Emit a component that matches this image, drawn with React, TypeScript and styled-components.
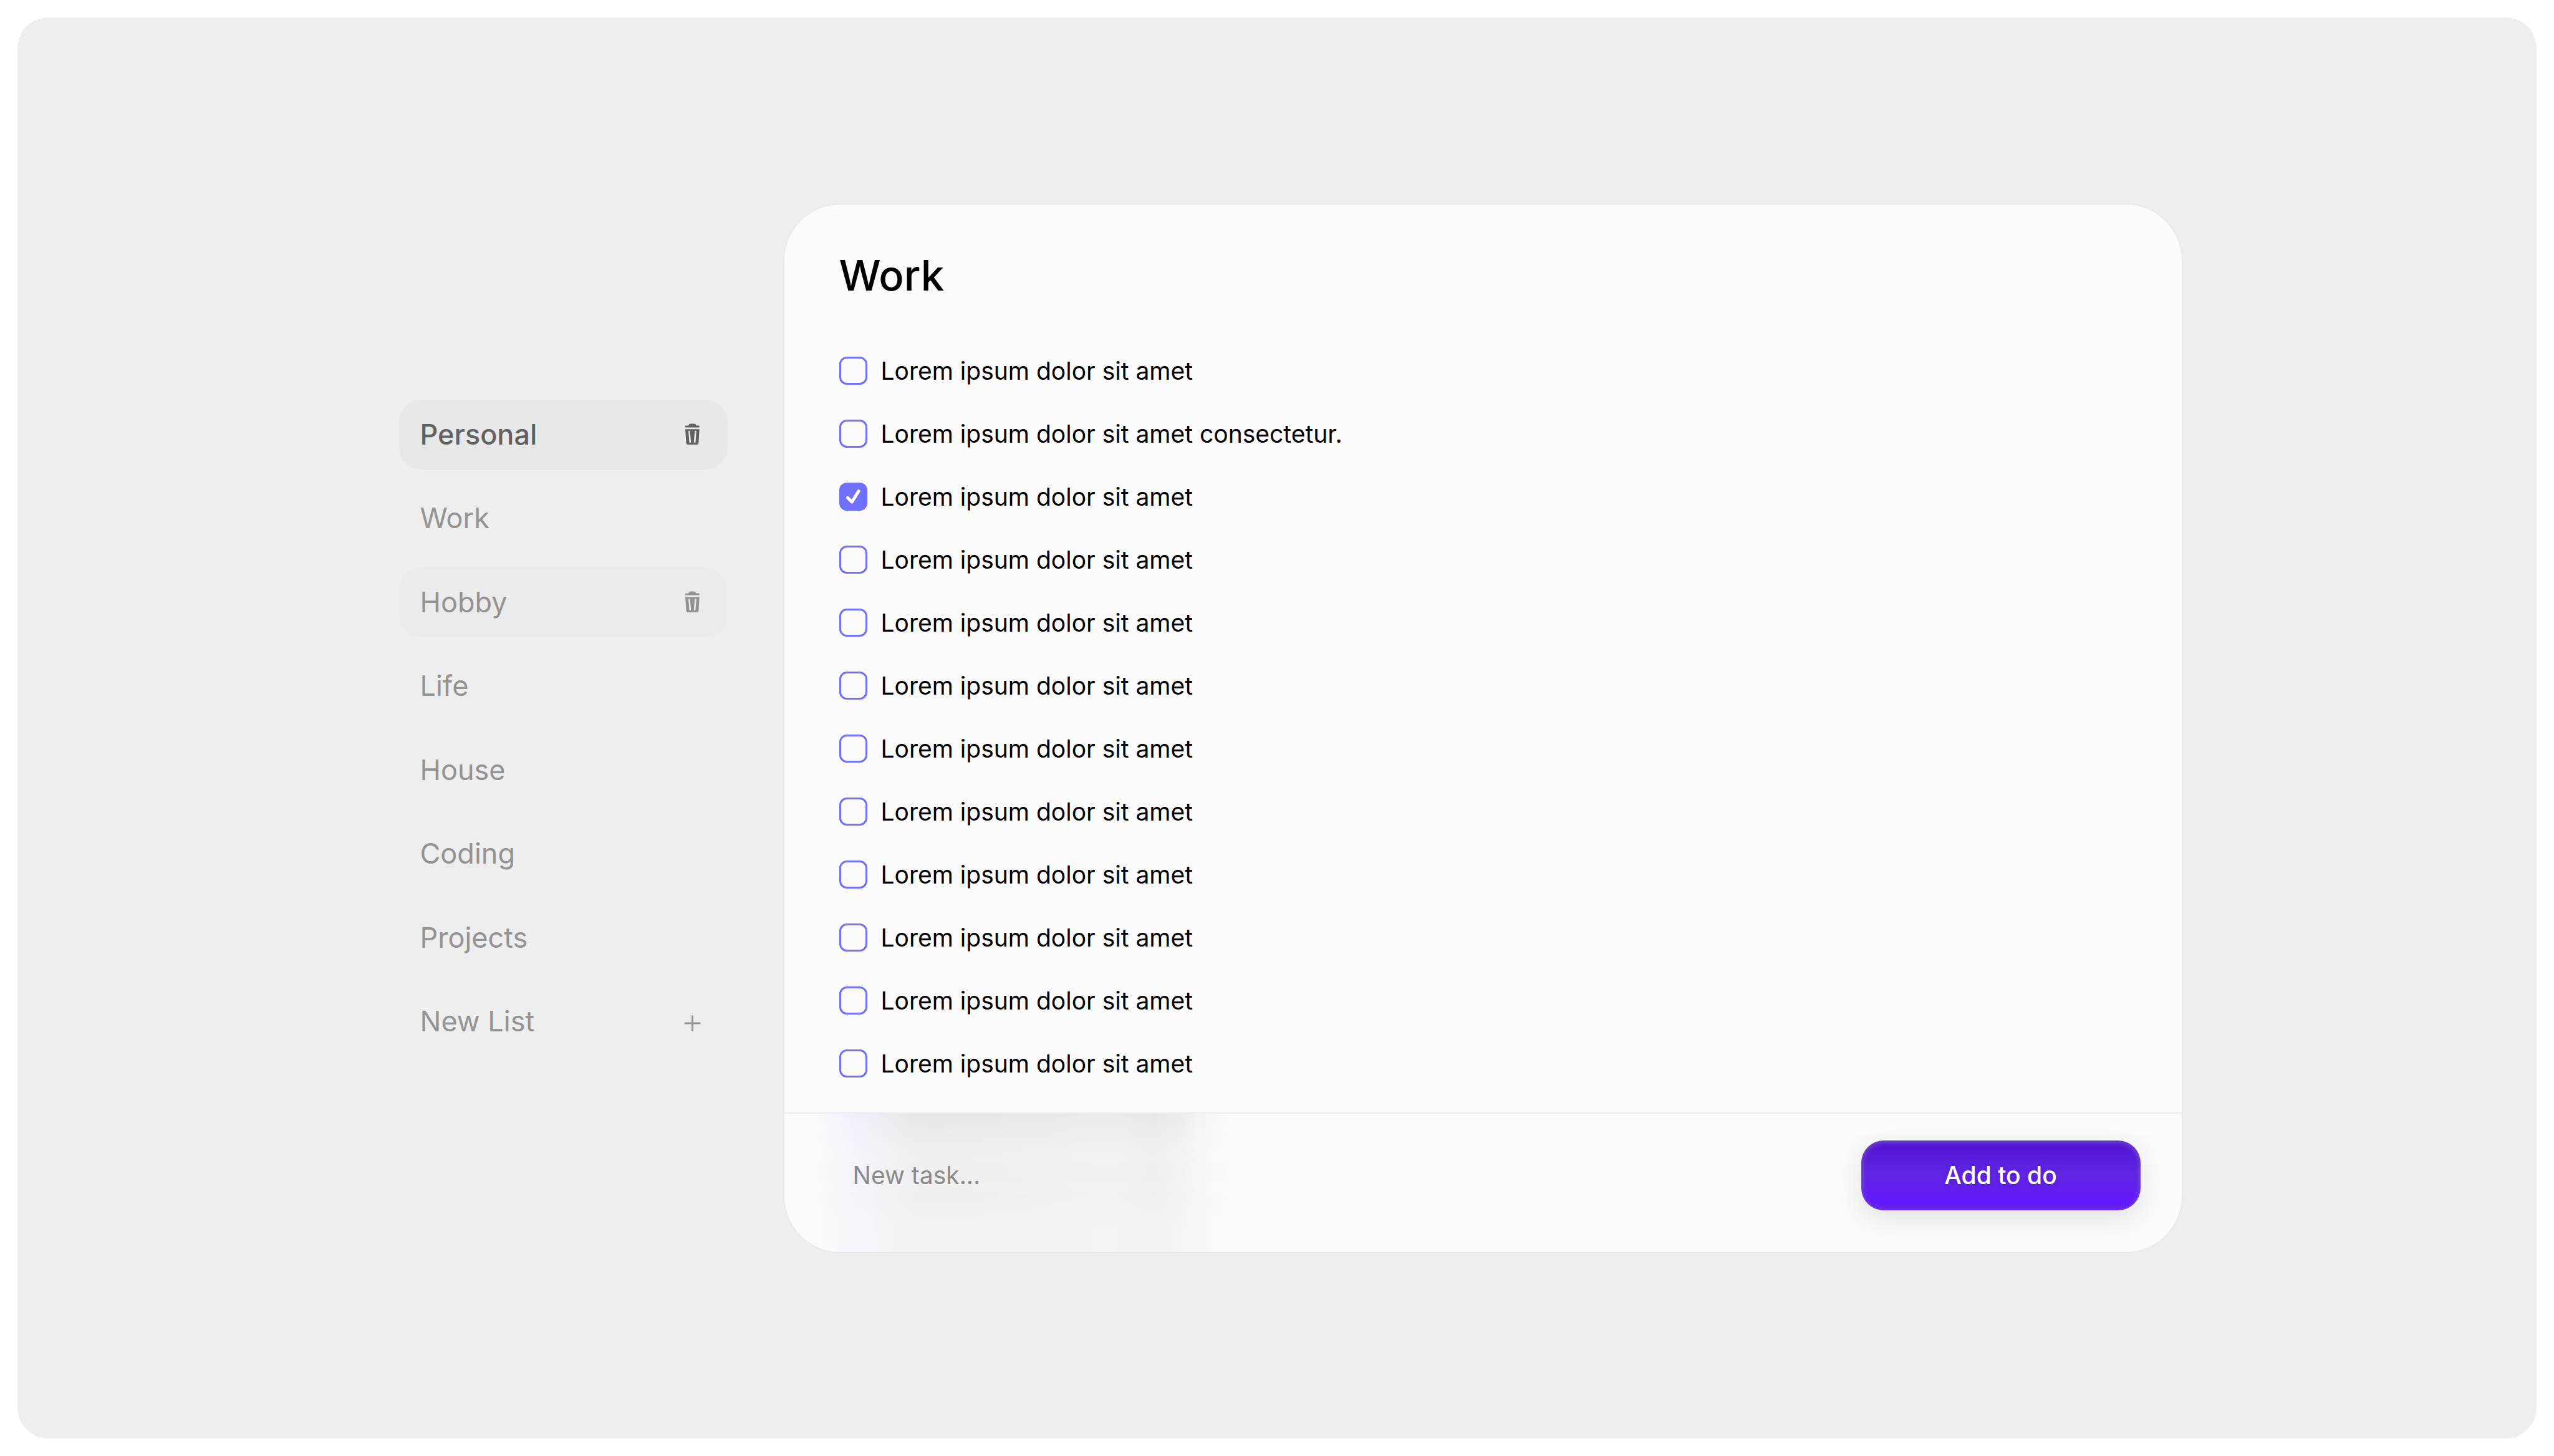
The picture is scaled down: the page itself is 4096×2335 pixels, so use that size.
import React, { FormEvent, useState } from "react";
import styled, { createGlobalStyle } from "styled-components";

const GlobalStyle = createGlobalStyle`
  *, *::before, *::after { box-sizing: border-box; }
  body { margin: 0; background: #ffffff; }
  body, button, input {
    font-family: Inter, "Liberation Sans", sans-serif;
    font-optical-sizing: none;
  }
  button, input { margin: 0; padding: 0; border: 0; background: none; color: inherit; }
  button { cursor: pointer; }
`;

const Page = styled.div`
  display: flex;
  min-height: 100vh;
  padding: 28px;
`;

const Stage = styled.main`
  flex: 1;
  display: flex;
  align-items: center;
  justify-content: center;
  gap: 91px;
  padding: 42px;
  border-radius: 50px;
  background: #eeeeee;
`;

const Sidebar = styled.nav`
  flex: 0 0 569px;
  padding-left: 42px;
`;

const Lists = styled.ul`
  display: flex;
  flex-direction: column;
  justify-content: space-between;
  min-height: 1054px;
  margin: 0;
  padding: 0;
  list-style: none;
`;

type Tone = "selected" | "hovered" | "plain";

const rowFill: Record<Tone, string> = {
  selected: "#e8e8e8",
  hovered: "#ebebeb",
  plain: "transparent",
};

const ListRow = styled.li<{ $tone: Tone }>`
  display: flex;
  align-items: center;
  height: 112px;
  padding-right: 34px;
  border-radius: 36px;
  background: ${(p) => rowFill[p.$tone]};
  color: ${(p) => (p.$tone === "selected" ? "#616161" : "#939393")};
  font-weight: ${(p) => (p.$tone === "selected" ? 500 : 400)};
`;

const ListName = styled.button`
  flex: 1;
  height: 100%;
  padding-left: 34px;
  font-size: 45px;
  font-weight: inherit;
  line-height: 56px;
  text-align: left;
`;

const IconButton = styled.button`
  display: flex;
  width: 45px;
  height: 45px;
`;

const Card = styled.section`
  flex: 0 1 2241px;
  overflow: hidden;
  border-radius: 90px;
  background: #fbfbfb;
  box-shadow: 0 0 0 2px rgba(0, 0, 0, 0.02);
`;

const Title = styled.h1`
  margin: 0;
  padding: 74px 88px 34px;
  color: #000000;
  font-size: 67px;
  font-weight: 500;
  line-height: 80px;
`;

const Tasks = styled.ul`
  display: flex;
  flex-direction: column;
  gap: 56px;
  margin: 0;
  padding: 56px 88px;
  list-style: none;
`;

const TaskLabel = styled.label`
  display: flex;
  align-items: center;
  gap: 22px;
  height: 45px;
  color: #000000;
  font-size: 39px;
  line-height: 45px;
  cursor: pointer;
`;

const Tick = styled.span`
  display: grid;
  flex: 0 0 45px;
  height: 45px;

  > * {
    grid-area: 1 / 1;
  }
`;

const TickInput = styled.input`
  appearance: none;
  width: 45px;
  height: 45px;
  border: 3px solid #7070ff;
  border-radius: 12px;
  cursor: pointer;

  &:checked {
    background: #7070ff;
  }
`;

const TickMark = styled.svg`
  z-index: 1;
  pointer-events: none;
`;

const Composer = styled.form`
  position: relative;
  isolation: isolate;
  display: flex;
  align-items: center;
  justify-content: space-between;
  padding: 43px 66px 67px 110px;
  border-top: 2px solid #ececec;

  &::before {
    content: "";
    position: absolute;
    inset: 0;
    z-index: -1;
    background: linear-gradient(
      90deg,
      #fbfbfb 14px,
      #f9fafb 50px,
      #f4f5fb 86px,
      #eeeffa 114px,
      #edeef6 140px,
      #ebebef 172px,
      #e8e8ea 205px,
      #e7e7e7 240px,
      #e9e9e9 400px,
      #ebebeb 520px,
      #e8e8e8 596px,
      #ececec 634px,
      #f2f2f2 660px,
      #f8f8f8 688px,
      #fbfbfb 728px
    );
    mask-image: linear-gradient(
      rgba(0, 0, 0, 1) 0%,
      rgba(0, 0, 0, 0.9) 8%,
      rgba(0, 0, 0, 0.65) 24%,
      rgba(0, 0, 0, 0.58) 42%,
      rgba(0, 0, 0, 0.62) 56%,
      rgba(0, 0, 0, 0.48) 78%,
      rgba(0, 0, 0, 0.46) 100%
    );
  }
`;

const NewTask = styled.input`
  flex: 1;
  min-width: 0;
  height: 112px;
  color: #000000;
  font-size: 39px;
  outline: none;

  &::placeholder {
    color: #8a8a8a;
    opacity: 1;
  }
`;

const AddButton = styled.button`
  flex: 0 0 448px;
  height: 112px;
  border-radius: 36px;
  background: linear-gradient(#5216d4 8%, #6025e2 48%, #611afa 84%);
  box-shadow:
    inset 0 3px 8px rgba(255, 255, 255, 0.14),
    inset 0 0 11px rgba(128, 128, 128, 0.4),
    0 11px 45px rgba(0, 0, 0, 0.11);
  color: #ffffff;
  font-size: 39px;
  font-weight: 500;
  text-shadow: 0 3px 8px rgba(0, 0, 0, 0.12);
`;

function TrashIcon({ slot }: { slot: string }) {
  return (
    <svg width="45" height="45" viewBox="0 0 45 45" fill="currentColor" aria-hidden="true">
      <path d="M12 8.6h4.2c.4-2 1.7-3.2 3.4-3.2h5.6c1.7 0 3 1.2 3.4 3.2h4.2a.9.9 0 0 1 .9.9v1.2a.9.9 0 0 1-.9.9H12a.9.9 0 0 1-.9-.9V9.5a.9.9 0 0 1 .9-.9z" />
      <path d="M11.1 14.2h22.6l-1.3 22.4a2.5 2.5 0 0 1-2.5 2.4H15a2.5 2.5 0 0 1-2.5-2.4z" />
      <path d="M17.4 18l1.4 16.8M27.5 18l-1.4 16.8" stroke={slot} strokeWidth="2.6" strokeLinecap="round" />
    </svg>
  );
}

function PlusIcon() {
  return (
    <svg width="45" height="45" viewBox="0 0 45 45" fill="none" aria-hidden="true">
      <path d="M22.5 13.5v23M11 25h23" stroke="currentColor" strokeWidth="3" strokeLinecap="round" />
    </svg>
  );
}

const lists: { name: string; tone: Tone }[] = [
  { name: "Personal", tone: "selected" },
  { name: "Work", tone: "plain" },
  { name: "Hobby", tone: "hovered" },
  { name: "Life", tone: "plain" },
  { name: "House", tone: "plain" },
  { name: "Coding", tone: "plain" },
  { name: "Projects", tone: "plain" },
];

const lorem = "Lorem ipsum dolor sit amet";

const initialTasks = Array.from({ length: 12 }, (_, i) => ({
  text: i === 1 ? `${lorem} consectetur.` : lorem,
  done: i === 2,
}));

export default function App() {
  const [tasks, setTasks] = useState(initialTasks);
  const [draft, setDraft] = useState("");

  const toggle = (index: number) =>
    setTasks(tasks.map((t, i) => (i === index ? { ...t, done: !t.done } : t)));

  const addTask = (event: FormEvent) => {
    event.preventDefault();
    if (!draft.trim()) return;
    setTasks([...tasks, { text: draft.trim(), done: false }]);
    setDraft("");
  };

  return (
    <Page>
      <GlobalStyle />
      <Stage>
        <Sidebar aria-label="Lists">
          <Lists>
            {lists.map(({ name, tone }) => (
              <ListRow key={name} $tone={tone}>
                <ListName type="button">{name}</ListName>
                {tone !== "plain" && (
                  <IconButton type="button" aria-label={`Delete ${name}`}>
                    <TrashIcon slot={rowFill[tone]} />
                  </IconButton>
                )}
              </ListRow>
            ))}
            <ListRow $tone="plain">
              <ListName type="button">New List</ListName>
              <IconButton type="button" aria-label="Create list">
                <PlusIcon />
              </IconButton>
            </ListRow>
          </Lists>
        </Sidebar>

        <Card>
          <Title>Work</Title>
          <Tasks>
            {tasks.map((task, i) => (
              <li key={i}>
                <TaskLabel>
                  <Tick>
                    <TickInput type="checkbox" checked={task.done} onChange={() => toggle(i)} />
                    {task.done && (
                      <TickMark width="45" height="45" viewBox="0 0 45 45" fill="none" aria-hidden="true">
                        <path
                          d="M13.4 24.3l6.9 6.6L31 13.6"
                          stroke="#ffffff"
                          strokeWidth="5"
                          strokeLinecap="round"
                          strokeLinejoin="round"
                        />
                      </TickMark>
                    )}
                  </Tick>
                  <span>{task.text}</span>
                </TaskLabel>
              </li>
            ))}
          </Tasks>
          <Composer onSubmit={addTask}>
            <NewTask
              aria-label="New task"
              placeholder="New task..."
              value={draft}
              onChange={(e) => setDraft(e.target.value)}
            />
            <AddButton type="submit">Add to do</AddButton>
          </Composer>
        </Card>
      </Stage>
    </Page>
  );
}
